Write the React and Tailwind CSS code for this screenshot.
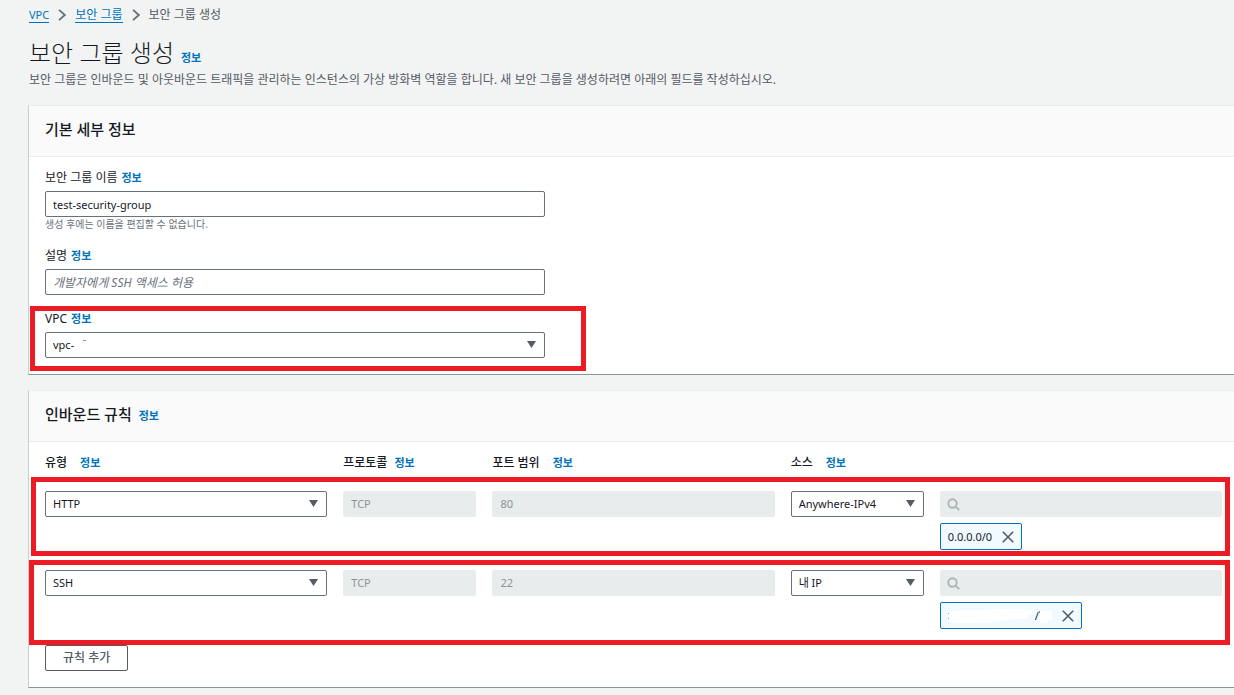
import React from "react";

function Info({ className = "" }) {
  return (
    <a href="#info" className={"text-[11px] leading-4 font-bold text-[#0073bb] " + className}>
      정보
    </a>
  );
}

function Chevron() {
  return (
    <svg className="h-3 w-2 shrink-0" viewBox="0 0 8 12" fill="none" stroke="#687078" strokeWidth="1.8" aria-hidden="true">
      <path d="M1 0.8 L6.8 6 L1 11.2" />
    </svg>
  );
}

function Select({ id, label, value, options, children }) {
  return (
    <div className="relative">
      <select
        id={id}
        aria-label={label}
        defaultValue={value}
        className="block h-[26px] w-full appearance-none rounded-xs border border-[#687078] bg-white pr-8 pl-[7px] text-[11px] leading-4 text-[#16191f]"
      >
        {options.map((option) => (
          <option key={option}>{option}</option>
        ))}
      </select>
      {children}
      <svg className="pointer-events-none absolute top-[9px] right-[9px] h-[7px] w-[9px]" viewBox="0 0 9 7" fill="#545b64" aria-hidden="true">
        <path d="M0 0 H9 L4.5 7 Z" />
      </svg>
    </div>
  );
}

function Disabled({ label, value }) {
  return (
    <input
      disabled
      aria-label={label}
      defaultValue={value}
      className="block h-[26px] w-full rounded-xs bg-[#e9ecec] px-2 pb-px text-[11px] leading-4 text-[#879596]"
    />
  );
}

function Search() {
  return (
    <div className="relative">
      <input disabled aria-label="소스 검색" className="block h-[26px] w-full rounded-xs bg-[#e9ecec] pl-8 text-[11px]" />
      <svg className="absolute top-[7px] left-[7px] h-[13px] w-[13px]" viewBox="0 0 13 13" fill="none" stroke="#aab7b8" strokeWidth="1.9" aria-hidden="true">
        <circle cx="5.5" cy="5.5" r="4.2" />
        <path d="M8.6 8.6 L12.2 12.2" />
      </svg>
    </div>
  );
}

function Remove() {
  return (
    <button type="button" aria-label="제거" className="flex h-3 w-3 items-center justify-center">
      <svg className="h-3 w-3" viewBox="0 0 12 12" fill="none" stroke="#545b64" strokeWidth="1.6" aria-hidden="true">
        <path d="M0.8 0.8 L11.2 11.2 M11.2 0.8 L0.8 11.2" />
      </svg>
    </button>
  );
}

function Chip({ children }) {
  return (
    <div className="mt-[6px] inline-flex h-[27px] items-center gap-[10px] rounded-xs border border-[#0073bb] bg-[#f1faff] px-[7px] align-top text-[11px] leading-4 text-[#16191f]">
      {children}
      <Remove />
    </div>
  );
}

function Masked() {
  return (
    <span className="flex items-center">
      <svg className="h-[17px] w-[87px]" viewBox="0 0 87 17" aria-hidden="true">
        <path fill="#fff" d="M1 4 H12 V3 H36 L54 2 L84 3 V7 L80 8 V12 H74 L52 13 V14 L34 16 H6 L5 15 H1 Z" />
        <path fill="#b9a878" d="M0 6h1v1H0z M0 11h1v1H0z" />
      </svg>
      <span>/</span>
      <svg className="h-[17px] w-[13px]" viewBox="0 0 13 17" aria-hidden="true">
        <path fill="#fff" d="M1 4 H13 V13 H9 V16 H1 Z" />
        <path fill="#8a9099" d="M0 4h1v2H0z" />
      </svg>
    </span>
  );
}

function Card({ title, info, children }) {
  return (
    <section className="border-t border-b border-l border-t-[#eaeded] border-b-[#879596] border-l-[#c8d0d0] bg-white">
      <header className="flex h-[51px] items-center gap-[7px] border-b border-[#eaeded] bg-[#fafafa] px-4 pb-1">
        <h2 className="text-[15px] leading-6 font-medium text-[#16191f]">{title}</h2>
        {info && <Info className="pt-1" />}
      </header>
      <div className="pt-[13px] pr-3 pb-4 pl-4">{children}</div>
    </section>
  );
}

function Label({ htmlFor, children }) {
  return (
    <div className="mb-[5px] flex items-center gap-1">
      <label htmlFor={htmlFor} className="text-xs leading-4 text-[#16191f]">{children}</label>
      <Info />
    </div>
  );
}

const columns = [
  { name: "유형", className: "col-span-2 gap-[13px]" },
  { name: "프로토콜", className: "gap-[7px]" },
  { name: "포트 범위", className: "col-span-2 gap-[13px]" },
  { name: "소스", className: "col-span-3 gap-[13px]" },
];

function Rule({ type, port, source, chip, outline }) {
  return (
    <div className="relative mt-5 grid grid-cols-8 gap-x-4">
      <div className="col-span-2">
        <Select label="유형" value={type} options={["HTTP", "SSH"]} />
      </div>
      <Disabled label="프로토콜" value="TCP" />
      <div className="col-span-2">
        <Disabled label="포트 범위" value={port} />
      </div>
      <Select label="소스" value={source} options={["Anywhere-IPv4", "내 IP"]} />
      <div className="col-span-2">
        <Search />
        <Chip>{chip}</Chip>
      </div>
      <div className={"pointer-events-none absolute border-5 border-[#ed1c24] " + outline} />
    </div>
  );
}

export default function App() {
  return (
    <div className="min-h-screen bg-[#f2f3f3] pt-[7px] pb-[7px] pl-7 font-['Noto_Sans','Noto_Sans_CJK_KR',sans-serif]">
      <nav aria-label="경로" className="flex items-center gap-[9px] pl-px text-xs leading-4 text-[#545b64]">
        <a href="#vpc" className="border-b border-[#0073bb] text-[11px] leading-[15px] text-[#0073bb]">VPC</a>
        <Chevron />
        <a href="#groups" className="border-b border-[#0073bb] leading-[15px] text-[#0073bb]">보안 그룹</a>
        <Chevron />
        <span>보안 그룹 생성</span>
      </nav>
      <header className="mt-[13px] mb-[15px] pl-px">
        <div className="flex items-center gap-[7px]">
          <h1 className="text-2xl leading-[34px] font-light text-[#16191f]">보안 그룹 생성</h1>
          <Info className="pt-[10px]" />
        </div>
        <p className="text-xs leading-5 text-[#545b64]">
          보안 그룹은 인바운드 및 아웃바운드 트래픽을 관리하는 인스턴스의 가상 방화벽 역할을 합니다. 새 보안 그룹을 생성하려면 아래의 필드를 작성하십시오.
        </p>
      </header>

      <main className="flex flex-col gap-[15px]">
        <Card title="기본 세부 정보">
          <div className="flex max-w-[500px] flex-col gap-4">
            <div>
              <Label htmlFor="name">보안 그룹 이름</Label>
              <input id="name" defaultValue="test-security-group" className="block h-[26px] w-full rounded-xs border border-[#687078] bg-white px-[7px] text-[11px] leading-4 text-[#16191f]" />
              <p className="text-[10px] leading-[15px] text-[#687078]">생성 후에는 이름을 편집할 수 없습니다.</p>
            </div>
            <div>
              <Label htmlFor="description">설명</Label>
              <input id="description" placeholder="개발자에게 SSH 액세스 허용" className="block h-[26px] w-full rounded-xs border border-[#687078] bg-white px-[7px] text-xs leading-4 placeholder:text-[#687078] placeholder:italic" />
            </div>
            <div className="relative">
              <Label htmlFor="vpc">VPC</Label>
              <Select id="vpc" value="vpc-" options={["vpc-"]}>
                <span className="pointer-events-none absolute top-2 left-[38px] h-px w-[3px] bg-[#879596]" />
              </Select>
              <div className="pointer-events-none absolute -top-[5px] -right-[41px] -bottom-[13px] -left-[15px] border-5 border-[#ed1c24]" />
            </div>
          </div>
        </Card>

        <Card title="인바운드 규칙" info>
          <div className="grid grid-cols-8 gap-x-4">
            {columns.map((column) => (
              <div key={column.name} className={"flex items-center " + column.className}>
                <h3 className="text-xs leading-4 font-medium text-[#16191f]">{column.name}</h3>
                <Info />
              </div>
            ))}
          </div>
          <Rule type="HTTP" port="80" source="Anywhere-IPv4" chip={<span>0.0.0.0/0</span>} outline="-top-[14px] -right-2 -bottom-[6px] -left-[14px]" />
          <Rule type="SSH" port="22" source="내 IP" chip={<Masked />} outline="-top-[10px] -right-2 -bottom-4 -left-4" />
          <button type="button" className="mt-4 block h-[26px] rounded-xs border border-[#545b64] bg-white px-[17px] text-xs leading-4 font-medium text-[#545b64]">
            규칙 추가
          </button>
        </Card>
      </main>
    </div>
  );
}
